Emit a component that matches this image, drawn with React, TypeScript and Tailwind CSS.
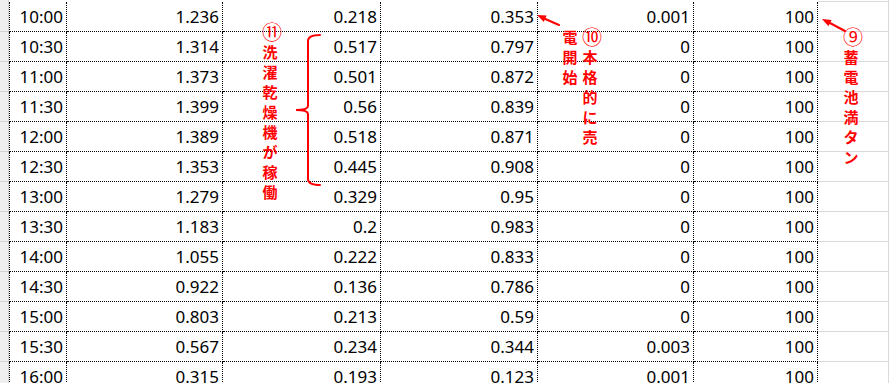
const rows: [string, string, string, string, string, string][] = [
  ["10:00", "1.236", "0.218", "0.353", "0.001", "100"],
  ["10:30", "1.314", "0.517", "0.797", "0", "100"],
  ["11:00", "1.373", "0.501", "0.872", "0", "100"],
  ["11:30", "1.399", "0.56", "0.839", "0", "100"],
  ["12:00", "1.389", "0.518", "0.871", "0", "100"],
  ["12:30", "1.353", "0.445", "0.908", "0", "100"],
  ["13:00", "1.279", "0.329", "0.95", "0", "100"],
  ["13:30", "1.183", "0.2", "0.983", "0", "100"],
  ["14:00", "1.055", "0.222", "0.833", "0", "100"],
  ["14:30", "0.922", "0.136", "0.786", "0", "100"],
  ["15:00", "0.803", "0.213", "0.59", "0", "100"],
  ["15:30", "0.567", "0.234", "0.344", "0.003", "100"],
  ["16:00", "0.315", "0.193", "0.123", "0.001", "100"],
];

const widths = ["w-[156px]", "w-[158px]", "w-[157px]", "w-[156px]", "w-[124px]"];

const note =
  "absolute w-[16px] break-all text-center text-[15px] font-bold leading-[20px] text-[#ff0000] [font-family:'Noto_Sans_CJK_JP',sans-serif]";

function Circled({ n }: { n: string }) {
  return <span className="block text-[20px] font-normal leading-[20px]">{n}</span>;
}

function Annotations() {
  return (
    <>
      <div className={`${note} left-[262px] top-[22px]`}>
        <Circled n="⑪" />
        洗濯乾燥機が稼働
      </div>
      <div className={`${note} left-[582px] top-[27px]`}>
        <Circled n="⑩" />
        本格的に売
      </div>
      <div className={`${note} left-[562px] top-[27px]`}>電開始</div>
      <div className={`${note} left-[843px] top-[27px]`}>
        <Circled n="⑨" />
        蓄電池満タン
      </div>
      <svg className="pointer-events-none absolute left-0 top-0" width="889" height="383">
        <g stroke="#ff0000" strokeWidth="2" fill="none" strokeLinecap="round">
          <path d="M320 35 Q308 35 308 41 L308 106 Q308 110 296 110 Q308 110 308 114 L308 179 Q308 185 320 185" />
          <line x1="559" y1="25" x2="543" y2="18" />
          <line x1="845" y1="31" x2="828" y2="22" />
        </g>
        <g fill="#ff0000">
          <polygon points="537,15 543.8,21.9 546.6,15.5" />
          <polygon points="822,19 828.4,26.3 831.6,20.1" />
        </g>
      </svg>
    </>
  );
}

export default function App() {
  return (
    <div className="relative h-[383px] w-[889px] overflow-hidden bg-white text-[17px] text-black [font-family:'Noto_Sans',sans-serif]">
      <div className="flex h-[2px]">
        <div className="w-[9px] border-r border-[#d4d4d4] bg-[#efefef]" />
        <div className="w-[809px]" />
        <div className="w-[71px] border-b border-r border-[#dadada]" />
      </div>
      {rows.map((r) => (
        <div key={r[0]} className="flex h-[30px]">
          <div className="w-[9px] border-b border-r border-[#d4d4d4] bg-[#efefef]" />
          <div className="flex w-[58px] items-center justify-end border-x border-b border-dotted border-black pr-[3px]">
            {r[0]}
          </div>
          {r.slice(1).map((v, i) => (
            <div
              key={i}
              className={`flex ${widths[i]} items-center justify-end border-r border-b border-dotted border-black pr-[3px]`}
            >
              {v}
            </div>
          ))}
          <div className="w-[71px] border-b border-r border-[#dadada]" />
        </div>
      ))}
      <Annotations />
    </div>
  );
}
